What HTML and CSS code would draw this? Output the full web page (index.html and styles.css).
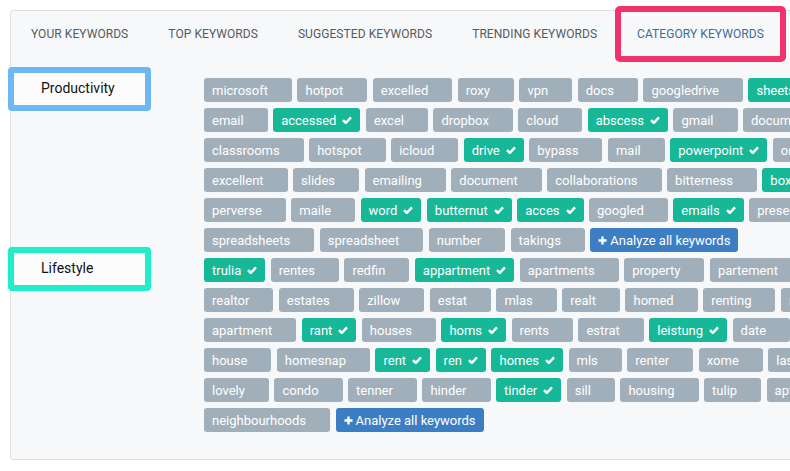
FILE: index.html
```html
<!DOCTYPE html>
<html lang="en">
<head>
<meta charset="utf-8">
<title>Category Keywords</title>
<link rel="stylesheet" href="styles.css">
</head>
<body>
<svg width="0" height="0" class="defs" aria-hidden="true">
  <symbol id="chk" viewBox="0 0 10 8"><path d="M1 4.1 L3.8 6.8 L9 1.4" fill="none" stroke="#fff" stroke-width="2.5" stroke-linejoin="round"/></symbol>
  <symbol id="plus" viewBox="0 0 10 10"><path d="M5 0.5 V9.5 M0.5 5 H9.5" fill="none" stroke="#fff" stroke-width="2.6"/></symbol>
</svg>
<div class="page">
  <div class="panel">
    <nav class="tabs">
      <div class="tab">YOUR KEYWORDS</div>
      <div class="tab">TOP KEYWORDS</div>
      <div class="tab">SUGGESTED KEYWORDS</div>
      <div class="tab">TRENDING KEYWORDS</div>
      <div class="tab tab--active">CATEGORY KEYWORDS</div>
    </nav>
    <div class="content">
      <section class="cat">
        <div class="cat-side"><div class="cat-label cat-label--blue">Productivity</div></div>
        <div class="tags">
          <div class="tag-row">
            <span class="tag">microsoft</span><span class="tag">hotpot</span><span class="tag">excelled</span><span class="tag">roxy</span><span class="tag">vpn</span><span class="tag">docs</span><span class="tag">googledrive</span><span class="tag tag--on">sheets<svg class="ic"><use href="#chk"/></svg></span>
          </div>
          <div class="tag-row">
            <span class="tag">email</span><span class="tag tag--on">accessed<svg class="ic"><use href="#chk"/></svg></span><span class="tag">excel</span><span class="tag">dropbox</span><span class="tag">cloud</span><span class="tag tag--on">abscess<svg class="ic"><use href="#chk"/></svg></span><span class="tag">gmail</span><span class="tag">documents</span>
          </div>
          <div class="tag-row">
            <span class="tag">classrooms</span><span class="tag">hotspot</span><span class="tag">icloud</span><span class="tag tag--on">drive<svg class="ic"><use href="#chk"/></svg></span><span class="tag">bypass</span><span class="tag">mail</span><span class="tag tag--on">powerpoint<svg class="ic"><use href="#chk"/></svg></span><span class="tag">onedrive</span>
          </div>
          <div class="tag-row">
            <span class="tag">excellent</span><span class="tag">slides</span><span class="tag">emailing</span><span class="tag">document</span><span class="tag">collaborations</span><span class="tag">bitterness</span><span class="tag tag--on">box<svg class="ic"><use href="#chk"/></svg></span>
          </div>
          <div class="tag-row">
            <span class="tag">perverse</span><span class="tag">maile</span><span class="tag tag--on">word<svg class="ic"><use href="#chk"/></svg></span><span class="tag tag--on">butternut<svg class="ic"><use href="#chk"/></svg></span><span class="tag tag--on">acces<svg class="ic"><use href="#chk"/></svg></span><span class="tag">googled</span><span class="tag tag--on">emails<svg class="ic"><use href="#chk"/></svg></span><span class="tag">presentation</span>
          </div>
          <div class="tag-row">
            <span class="tag">spreadsheets</span><span class="tag">spreadsheet</span><span class="tag">number</span><span class="tag">takings</span><span class="analyze"><svg class="ic-plus"><use href="#plus"/></svg>Analyze all keywords</span>
          </div>
        </div>
      </section>
      <section class="cat">
        <div class="cat-side"><div class="cat-label cat-label--teal">Lifestyle</div></div>
        <div class="tags">
          <div class="tag-row">
            <span class="tag tag--on">trulia<svg class="ic"><use href="#chk"/></svg></span><span class="tag">rentes</span><span class="tag">redfin</span><span class="tag tag--on">appartment<svg class="ic"><use href="#chk"/></svg></span><span class="tag">apartments</span><span class="tag">property</span><span class="tag">partement</span><span class="tag">rental</span>
          </div>
          <div class="tag-row">
            <span class="tag">realtor</span><span class="tag">estates</span><span class="tag">zillow</span><span class="tag">estat</span><span class="tag">mlas</span><span class="tag">realt</span><span class="tag">homed</span><span class="tag">renting</span><span class="tag">rentals</span>
          </div>
          <div class="tag-row">
            <span class="tag">apartment</span><span class="tag tag--on">rant<svg class="ic"><use href="#chk"/></svg></span><span class="tag">houses</span><span class="tag tag--on">homs<svg class="ic"><use href="#chk"/></svg></span><span class="tag">rents</span><span class="tag">estrat</span><span class="tag tag--on">leistung<svg class="ic"><use href="#chk"/></svg></span><span class="tag">date</span>
          </div>
          <div class="tag-row">
            <span class="tag">house</span><span class="tag">homesnap</span><span class="tag tag--on">rent<svg class="ic"><use href="#chk"/></svg></span><span class="tag tag--on">ren<svg class="ic"><use href="#chk"/></svg></span><span class="tag tag--on">homes<svg class="ic"><use href="#chk"/></svg></span><span class="tag">mls</span><span class="tag">renter</span><span class="tag">xome</span><span class="tag">lasting</span>
          </div>
          <div class="tag-row">
            <span class="tag">lovely</span><span class="tag">condo</span><span class="tag">tenner</span><span class="tag">hinder</span><span class="tag tag--on">tinder<svg class="ic"><use href="#chk"/></svg></span><span class="tag">sill</span><span class="tag">housing</span><span class="tag">tulip</span><span class="tag">apts</span>
          </div>
          <div class="tag-row">
            <span class="tag">neighbourhoods</span><span class="analyze"><svg class="ic-plus"><use href="#plus"/></svg>Analyze all keywords</span>
          </div>
        </div>
      </section>
    </div>
  </div>
</div>
</body>
</html>
```

FILE: styles.css
```css
html, body {
  margin: 0;
  padding: 0;
  background: #ffffff;
  overflow: hidden;
  font-family: Roboto, "Liberation Sans", Arial, sans-serif;
}

.defs {
  position: absolute;
  width: 0;
  height: 0;
}

.page {
  width: 790px;
  height: 471px;
  overflow: hidden;
  padding: 10px 0 0 10px;
  box-sizing: border-box;
}

.panel {
  width: 1100px;
  background: #f7f8fa;
  border: 1px solid #dcdfe4;
  border-radius: 3px;
}

.tabs {
  display: flex;
  height: 44px;
}

.tab {
  padding: 1px 20px 0;
  line-height: 44px;
  height: 44px;
  box-sizing: border-box;
  font-size: 12px;
  letter-spacing: 0.07px;
  color: #555a5f;
  white-space: nowrap;
}

.tab--active {
  position: relative;
  color: #3b6e93;
}

.tab--active::after {
  content: "";
  position: absolute;
  left: -2px;
  right: -2px;
  top: -5px;
  bottom: -7px;
  border: 6px solid #f2326d;
  border-radius: 5px;
}

.content {
  display: flex;
  flex-direction: column;
  gap: 6px;
  padding: 23px 0 27px 0;
}

.cat {
  display: flex;
  align-items: flex-start;
}

.cat-side {
  width: 193px;
  flex: none;
}

.cat-label {
  box-sizing: border-box;
  width: 143px;
  height: 44px;
  margin: -11px 0 0 -3px;
  padding: 0 0 2px 27px;
  border: 6px solid #6db7f2;
  border-radius: 4px;
  background: #fcfcfd;
  font-size: 14px;
  font-weight: 400;
  color: #111111;
  display: flex;
  align-items: center;
}

.cat-label--teal {
  border-color: #1eeec9;
}

.tags {
  display: flex;
  flex-direction: column;
  gap: 6px;
}

.tag-row {
  display: flex;
  gap: 5.5px;
  white-space: nowrap;
}

.tag {
  height: 24px;
  box-sizing: border-box;
  padding: 0 24px 0 8px;
  border-radius: 3px;
  background: #a1afba;
  color: #ffffff;
  font-size: 13px;
  display: flex;
  align-items: center;
  flex: none;
}

.tag--on {
  background: #17b897;
  padding-right: 8px;
}

.ic {
  width: 10px;
  height: 8px;
  margin-left: 6px;
}

.analyze {
  height: 24px;
  box-sizing: border-box;
  padding: 0 8px;
  border-radius: 3px;
  background: #3c7ec4;
  color: #ffffff;
  font-size: 13px;
  display: flex;
  align-items: center;
  flex: none;
}

.ic-plus {
  width: 9px;
  height: 9px;
  margin-right: 3px;
}
```
